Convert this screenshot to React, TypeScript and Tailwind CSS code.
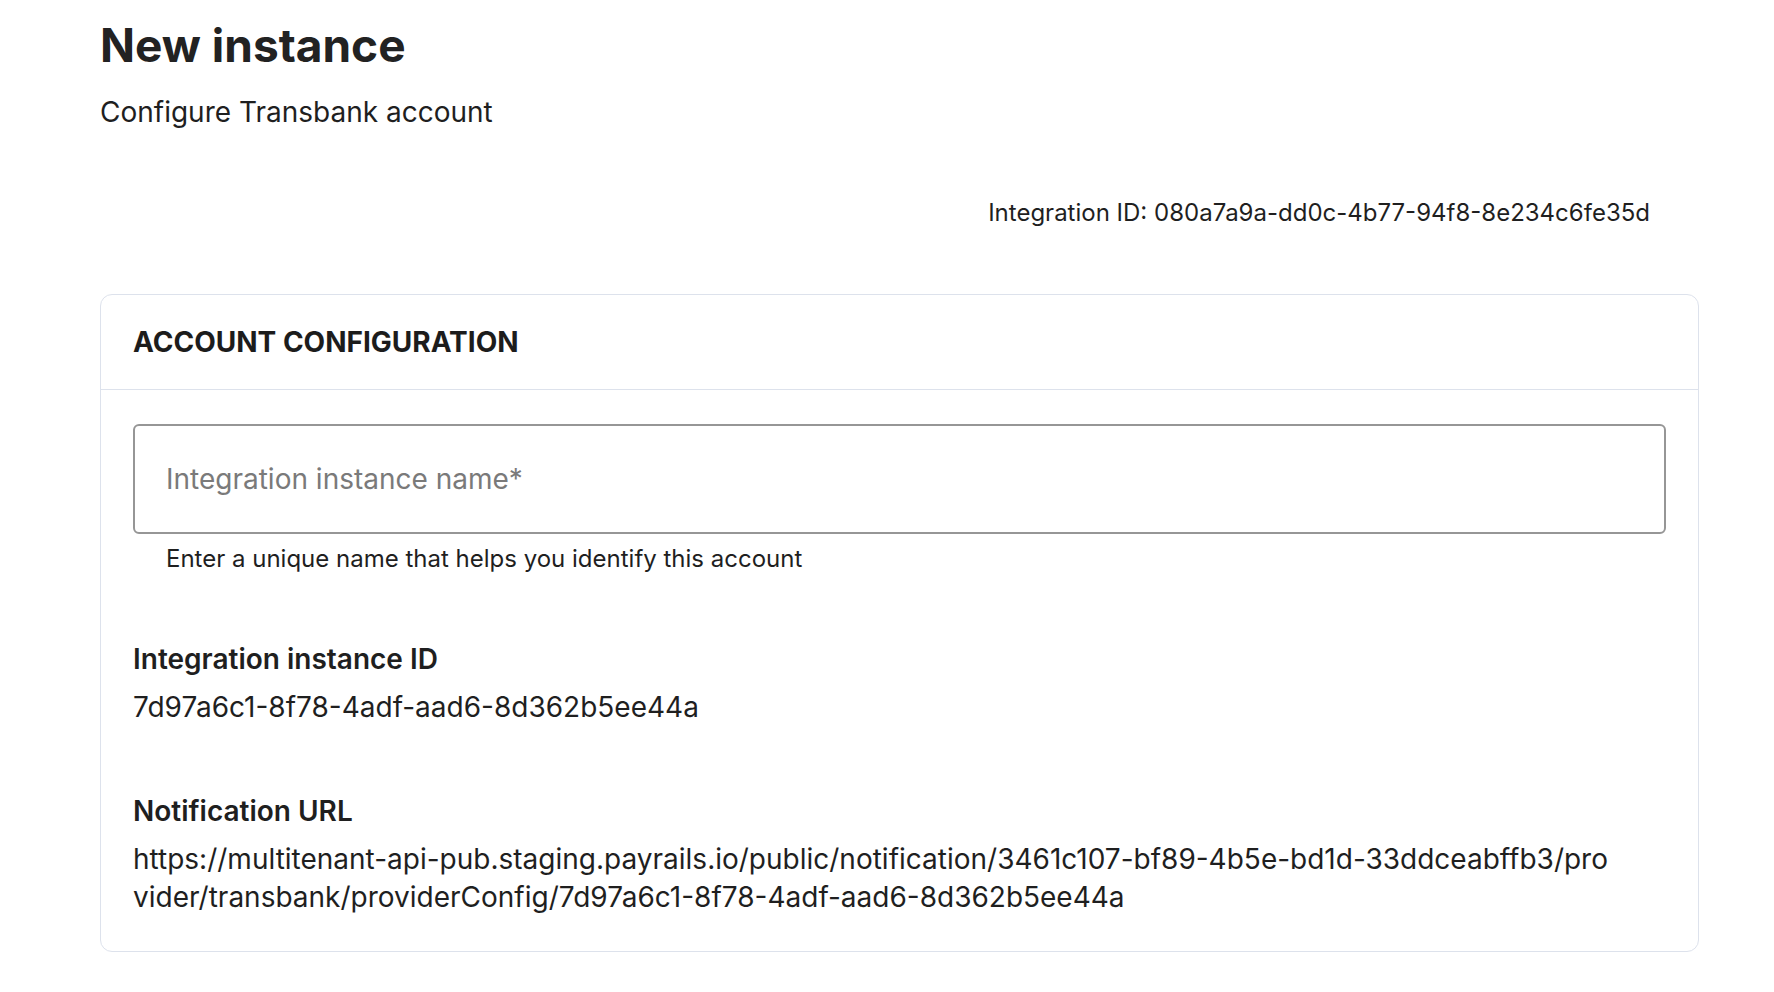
export default function App() {
  const instanceId = "7d97a6c1-8f78-4adf-aad6-8d362b5ee44a";
  const notificationUrl =
    "https://multitenant-api-pub.staging.payrails.io/public/notification/3461c107-bf89-4b5e-bd1d-33ddceabffb3/provider/transbank/providerConfig/" +
    instanceId;

  return (
    <div className="min-h-screen bg-white font-['Inter','Noto_Sans',sans-serif] text-[#1f1f1f]">
      <div className="w-[1599px] ml-[100px] pt-[17px] pb-10">
        {/* Page header */}
        <h1 className="text-[46px] leading-[56px] font-bold text-[#222222]">New instance</h1>
        <p className="mt-[21px] text-[28px] leading-[36px]">Configure Transbank account</p>

        <div className="mt-[68px] flex justify-end pr-[49px]">
          <span className="text-[24px] leading-[30px]">
            Integration ID: 080a7a9a-dd0c-4b77-94f8-8e234c6fe35d
          </span>
        </div>

        {/* Account configuration card */}
        <div className="mt-[66px] rounded-xl border border-[#dde2ec] bg-white">
          <div className="px-8 py-[29px] border-b border-[#dde2ec]">
            <h2 className="text-[28px] leading-[36px] font-bold uppercase text-[#1c1c1c]">
              Account configuration
            </h2>
          </div>

          <div className="px-8 pt-[34px] pb-[35px]">
            <input
              type="text"
              placeholder="Integration instance name*"
              className="block w-full h-[110px] rounded-md border-2 border-[#969696] px-[31px] text-[28px] text-[#1f1f1f] placeholder:text-[#7a7a7a] outline-none"
            />
            <p className="mt-[10px] pl-[33px] text-[24px] leading-[30px]">
              Enter a unique name that helps you identify this account
            </p>

            <div className="mt-[67px]">
              <h3 className="text-[28px] leading-[36px] font-semibold">Integration instance ID</h3>
              <p className="mt-[12px] text-[28px] leading-[36px]">{instanceId}</p>
            </div>

            <div className="mt-[68px]">
              <h3 className="text-[28px] leading-[36px] font-semibold">Notification URL</h3>
              <p className="mt-[11px] max-w-[1482px] text-[28px] leading-[38px] break-all">
                {notificationUrl}
              </p>
            </div>
          </div>
        </div>
      </div>
    </div>
  );
}
